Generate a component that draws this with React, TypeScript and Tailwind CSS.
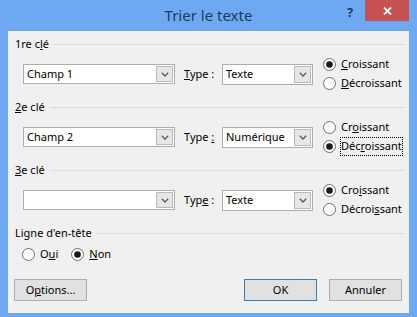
import type { ReactNode } from "react";

function Radio({ checked }: { checked?: boolean }) {
  return (
    <svg width="13" height="13" viewBox="0 0 13 13" className="shrink-0">
      <circle cx="6.5" cy="6.5" r="6" fill="#ffffff" stroke="#6f6f6f" />
      {checked && <circle cx="6.5" cy="6.5" r="3.3" fill="#1a1a1a" />}
    </svg>
  );
}

function Chevron() {
  return (
    <svg width="8" height="5" viewBox="0 0 8 5">
      <path d="M0.8 0.8 L4 4 L7.2 0.8" fill="none" stroke="#5a5a5a" strokeWidth="1.3" />
    </svg>
  );
}

function Combo({ value, className }: { value: string; className: string }) {
  return (
    <div className={`flex border border-[#abadb3] bg-white ${className}`}>
      <span className="flex-1 pl-[3px] flex items-center">{value}</span>
      <span className="w-[17px] m-px bg-[#e6e6e6] border border-[#b9b9b9] flex items-center justify-center">
        <Chevron />
      </span>
    </div>
  );
}

function RadioItem({ checked, focus, children }: { checked?: boolean; focus?: boolean; children: ReactNode }) {
  return (
    <div className="flex items-center h-[19px] gap-[5px]">
      <Radio checked={checked} />
      <span className={focus ? "outline-1 outline-dotted outline-black" : ""}>{children}</span>
    </div>
  );
}

function Section({ title, className, children }: { title: ReactNode; className?: string; children: ReactNode }) {
  return (
    <div className={className}>
      <div className="flex items-center h-[16px] pr-[4px]">
        <span>{title}</span>
        <div className="flex-1 h-px bg-[#dcdcdc] ml-[5px]" />
      </div>
      {children}
    </div>
  );
}

function KeyRow({
  field,
  typeLabel,
  type,
  asc,
  desc,
  ascending,
  focus,
}: {
  field: string;
  typeLabel: ReactNode;
  type: string;
  asc: ReactNode;
  desc: ReactNode;
  ascending: boolean;
  focus?: boolean;
}) {
  return (
    <div className="flex items-center mt-[3px] ml-[8px]">
      <Combo value={field} className="w-[152px] h-[20px]" />
      <span className="w-[38px] ml-[9px]">{typeLabel}</span>
      <Combo value={type} className="w-[91px] h-[21px]" />
      <div className="flex flex-col ml-[10px]">
        <RadioItem checked={ascending}>{asc}</RadioItem>
        <RadioItem checked={!ascending} focus={focus}>
          {desc}
        </RadioItem>
      </div>
    </div>
  );
}

export default function App() {
  return (
    <div className="w-[417px] h-[317px] bg-[#6ca9f0] flex flex-col font-['Noto_Sans',sans-serif] text-[11px] text-black select-none">
      {/* title bar */}
      <div className="relative h-[31px] flex items-center justify-center shrink-0">
        <span className="text-[15px] text-[#1f3b5c]">Trier le texte</span>
        <span className="absolute left-[347px] top-[3px] text-[13px] font-bold text-[#1f3b5c]">?</span>
        <div className="absolute right-[8px] top-0 w-[44px] h-[21px] bg-[#c75050] flex items-center justify-center">
          <svg width="9" height="8" viewBox="0 0 9 8">
            <path d="M1 0.5 L8 7.5 M8 0.5 L1 7.5" stroke="#ffffff" strokeWidth="1.8" />
          </svg>
        </div>
      </div>

      {/* client area */}
      <div className="mx-[8px] h-[282px] bg-[#f0f0f0] flex flex-col pl-[7px] pt-[5px]">
        <Section
          title={
            <>
              1re c<u>l</u>é
            </>
          }
        >
          <KeyRow
            field="Champ 1"
            typeLabel={
              <>
                <u>T</u>ype :
              </>
            }
            type="Texte"
            asc={
              <>
                <u>C</u>roissant
              </>
            }
            desc={
              <>
                <u>D</u>écroissant
              </>
            }
            ascending
          />
        </Section>

        <Section
          className="mt-[6px]"
          title={
            <>
              <u>2</u>e clé
            </>
          }
        >
          <KeyRow
            field="Champ 2"
            typeLabel={
              <>
                Type <u>:</u>
              </>
            }
            type="Numérique"
            asc={
              <>
                Cr<u>o</u>issant
              </>
            }
            desc={
              <>
                Déc<u>r</u>oissant
              </>
            }
            ascending={false}
            focus
          />
        </Section>

        <Section
          className="mt-[6px]"
          title={
            <>
              <u>3</u>e clé
            </>
          }
        >
          <KeyRow
            field=""
            typeLabel={
              <>
                Typ<u>e</u> :
              </>
            }
            type="Texte"
            asc={
              <>
                Cro<u>i</u>ssant
              </>
            }
            desc={
              <>
                Décroi<u>s</u>sant
              </>
            }
            ascending
          />
        </Section>

        <Section className="mt-[6px]" title="Ligne d'en-tête">
          <div className="flex items-center mt-[4px] ml-[7px] gap-[13px]">
            <RadioItem>
              O<u>u</u>i
            </RadioItem>
            <RadioItem checked>
              <u>N</u>on
            </RadioItem>
          </div>
        </Section>

        <div className="flex items-center mt-[15px] pr-[7px]">
          <button className="w-[73px] h-[22px] ml-[-1px] bg-[#e1e1e1] border border-[#adadad]">
            O<u>p</u>tions...
          </button>
          <div className="flex-1" />
          <button className="w-[73px] h-[22px] bg-[#e1e1e1] border border-[#3c7fb1]">OK</button>
          <button className="w-[73px] h-[22px] ml-[12px] bg-[#e1e1e1] border border-[#adadad]">Annuler</button>
        </div>
      </div>
      <div className="flex-1" />
    </div>
  );
}
